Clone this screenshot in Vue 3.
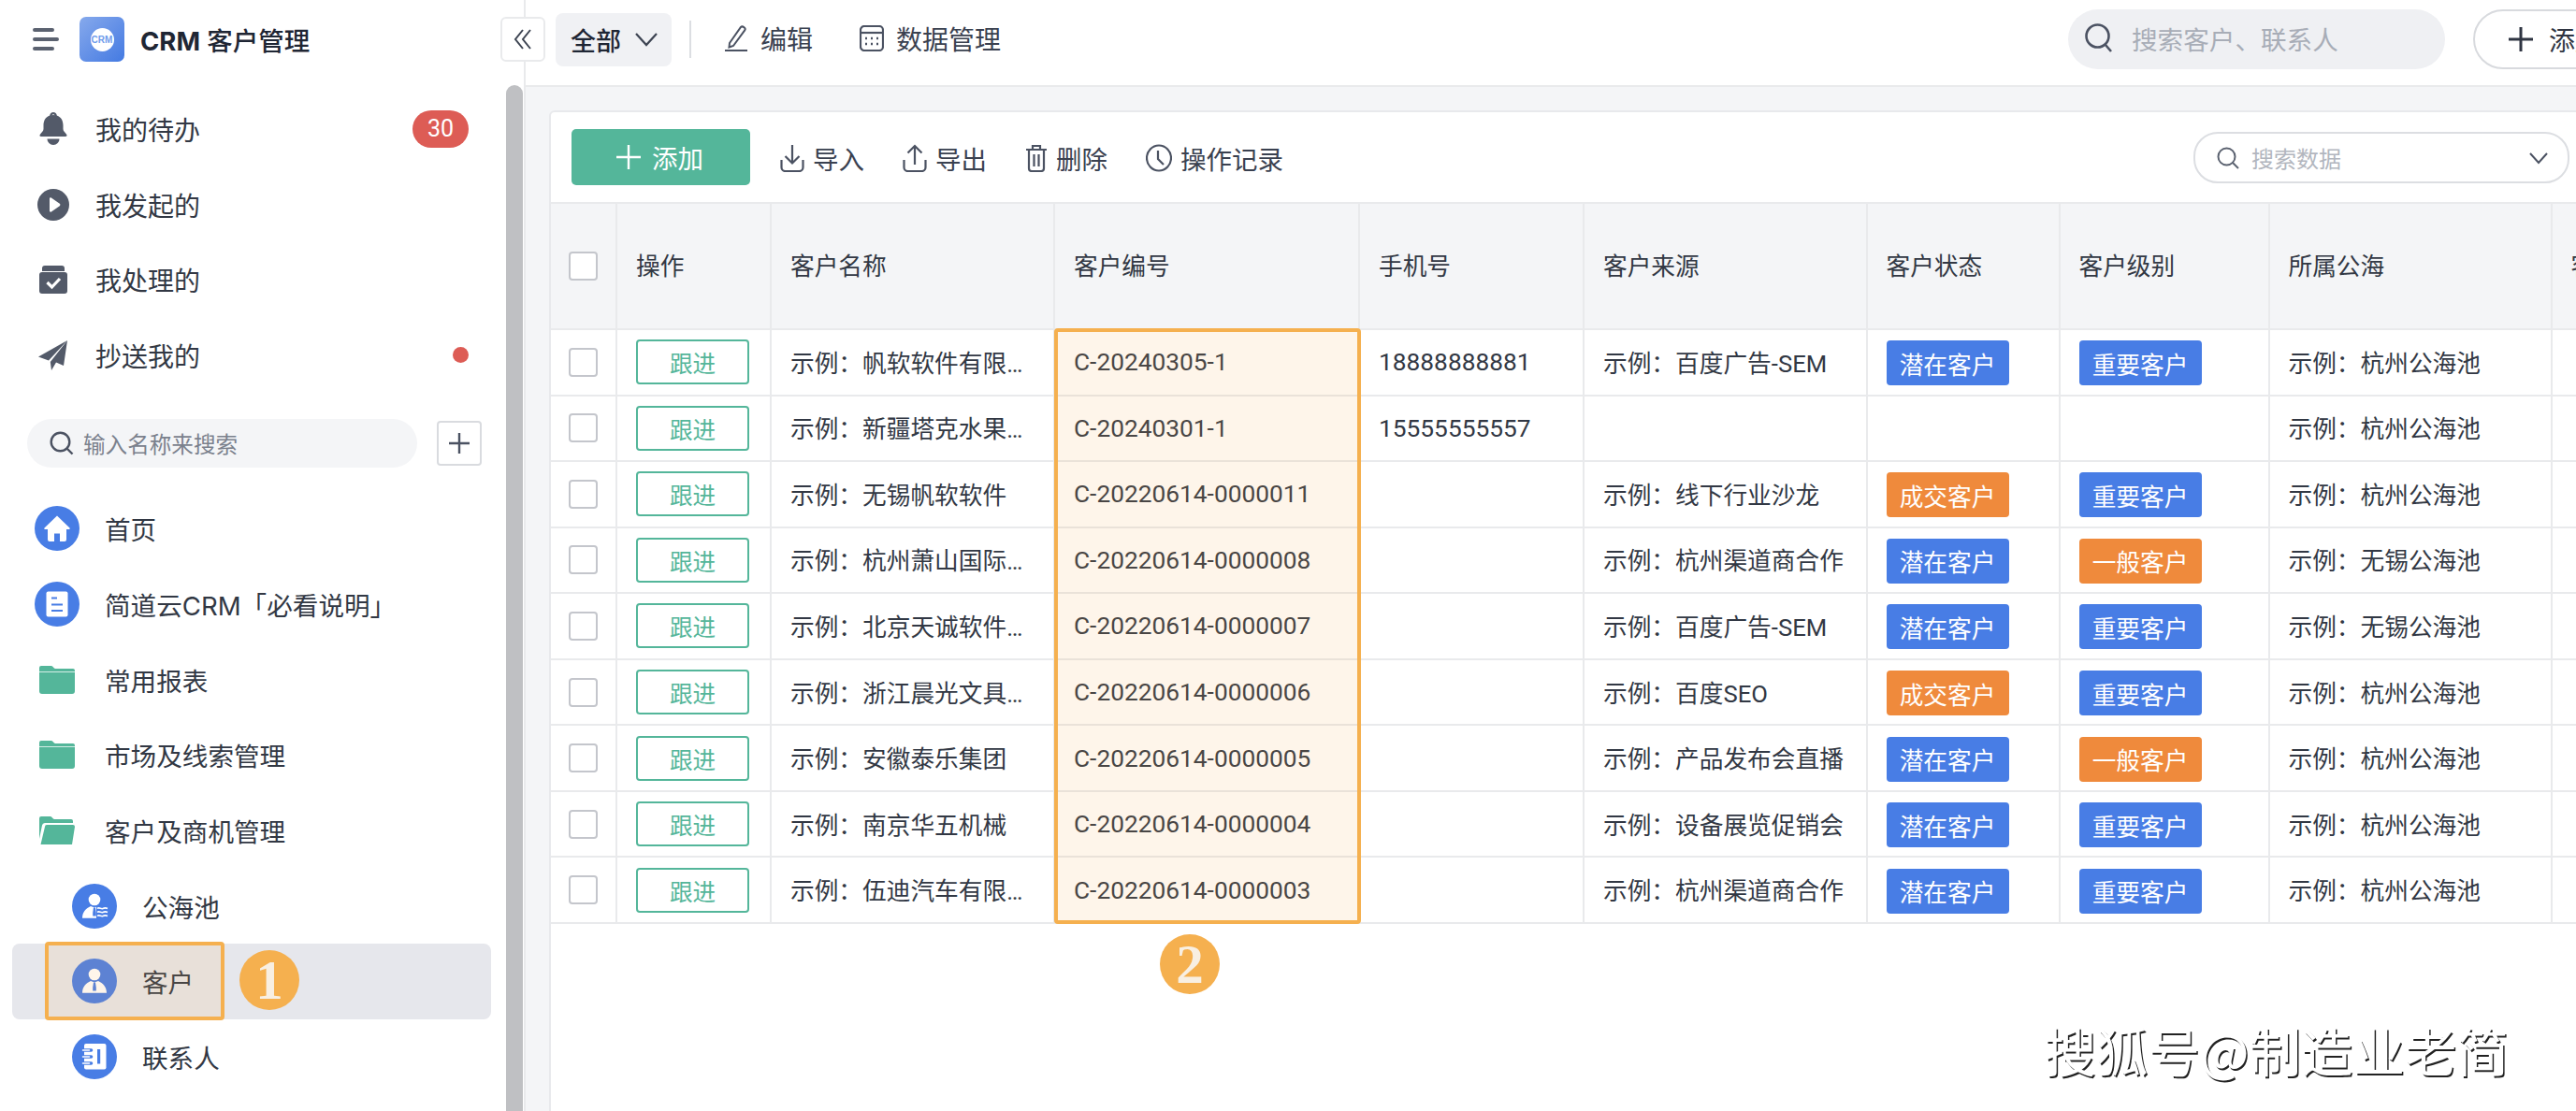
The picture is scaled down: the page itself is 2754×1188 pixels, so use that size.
<script setup>
const topItems = [
  { key: 'bell', label: '我的待办', badge: '30' },
  { key: 'play', label: '我发起的' },
  { key: 'box', label: '我处理的' },
  { key: 'plane', label: '抄送我的', dot: true }
];

const treeItems = [
  { key: 'home', label: '首页' },
  { key: 'doc', label: '简道云CRM「必看说明」' },
  { key: 'folder', label: '常用报表' },
  { key: 'folder', label: '市场及线索管理' },
  { key: 'open', label: '客户及商机管理' },
  { key: 'sea', label: '公海池', sub: true },
  { key: 'person', label: '客户', sub: true, active: true },
  { key: 'contact', label: '联系人', sub: true }
];

const columns = ['操作', '客户名称', '客户编号', '手机号', '客户来源', '客户状态', '客户级别', '所属公海', '客户'];

const rows = [
  { name: '示例：帆软软件有限公司', no: 'C-20240305-1', phone: '18888888881', source: '示例：百度广告-SEM', status: '潜在客户', level: '重要客户', sea: '示例：杭州公海池' },
  { name: '示例：新疆塔克水果有限公司', no: 'C-20240301-1', phone: '15555555557', source: '', status: '', level: '', sea: '示例：杭州公海池' },
  { name: '示例：无锡帆软软件', no: 'C-20220614-0000011', phone: '', source: '示例：线下行业沙龙', status: '成交客户', level: '重要客户', sea: '示例：杭州公海池' },
  { name: '示例：杭州萧山国际机场', no: 'C-20220614-0000008', phone: '', source: '示例：杭州渠道商合作', status: '潜在客户', level: '一般客户', sea: '示例：无锡公海池' },
  { name: '示例：北京天诚软件公司', no: 'C-20220614-0000007', phone: '', source: '示例：百度广告-SEM', status: '潜在客户', level: '重要客户', sea: '示例：无锡公海池' },
  { name: '示例：浙江晨光文具公司', no: 'C-20220614-0000006', phone: '', source: '示例：百度SEO', status: '成交客户', level: '重要客户', sea: '示例：杭州公海池' },
  { name: '示例：安徽泰乐集团', no: 'C-20220614-0000005', phone: '', source: '示例：产品发布会直播', status: '潜在客户', level: '一般客户', sea: '示例：杭州公海池' },
  { name: '示例：南京华五机械', no: 'C-20220614-0000004', phone: '', source: '示例：设备展览促销会', status: '潜在客户', level: '重要客户', sea: '示例：杭州公海池' },
  { name: '示例：伍迪汽车有限公司', no: 'C-20220614-0000003', phone: '', source: '示例：杭州渠道商合作', status: '潜在客户', level: '重要客户', sea: '示例：杭州公海池' }
];

const orangeTags = ['成交客户', '一般客户'];
const tagClass = (text) => (orangeTags.includes(text) ? 'tag orange' : 'tag');
</script>

<template>
  <div class="page">
    <aside class="side">
      <div class="side-head">
        <svg class="burger" width="28" height="24" viewBox="0 0 28 24">
          <path d="M2 2h19M2 12h24M2 22h19" stroke="#5b6270" stroke-width="4" stroke-linecap="round" />
        </svg>
        <div class="logo"><span>CRM</span></div>
        <div class="app-title"><b>CRM</b> 客户管理</div>
        <button class="collapse">
          <svg width="20" height="22" viewBox="0 0 20 22" fill="none" stroke="#3d4452" stroke-width="2">
            <path d="M10 1L2 11l8 10M18 1l-8 10 8 10" />
          </svg>
        </button>
      </div>

      <div class="side-body">
        <div class="side-scroll">
          <div v-for="item in topItems" :key="item.key" class="top-item">
            <span class="top-icon">
              <svg v-if="item.key === 'bell'" width="30" height="36" viewBox="0 0 30 36" fill="#535a69">
                <path fill-rule="evenodd" d="M15 0a4 4 0 0 1 3.800 3.400C23.500 5 25.500 9.200 25.500 14v4c0 2.500 2.500 3.800 3.800 6 .6 1 0 2-1.300 2H2c-1.300 0-1.900-1-1.300-2C2 21.800 4.500 20.500 4.500 18v-4c0-4.800 2-9 6.700-10.600A4 4 0 0 1 15 0zm0 2.200a1.800 1.800 0 0 0-1.500 1 9 9 0 0 1 3 0 1.800 1.800 0 0 0-1.500-1z" />
                <path d="M8.500 28.500h13c0 3.500-2.900 6.500-6.500 6.500s-6.500-3-6.500-6.500z" />
              </svg>
              <svg v-else-if="item.key === 'play'" width="34" height="34" viewBox="0 0 34 34">
                <circle cx="17" cy="17" r="17" fill="#535a69" />
                <path d="M13 10.500c0-1 1-1.500 1.800-1l9 6.300c.8.600.8 1.800 0 2.400l-9 6.300c-.8.500-1.800 0-1.800-1z" fill="#fff" />
              </svg>
              <svg v-else-if="item.key === 'box'" width="30" height="30" viewBox="0 0 30 30">
                <path d="M3 3a3 3 0 0 1 3-3h18a3 3 0 0 1 3 3v3H3z" fill="#535a69" />
                <rect y="7" width="30" height="23" rx="3" fill="#535a69" />
                <path d="M8.500 18l5 5 8.500-9" fill="none" stroke="#fff" stroke-width="3.200" />
              </svg>
              <svg v-else width="32" height="32" viewBox="0 0 32 32" fill="#535a69">
                <path d="M31 0L0 17.500 11 21.500z" />
                <path d="M31 0L27 27 19 23.500 14 32 12.800 23z" />
              </svg>
            </span>
            <span class="top-label">{{ item.label }}</span>
            <span v-if="item.badge" class="badge">{{ item.badge }}</span>
            <span v-if="item.dot" class="dot"></span>
          </div>

          <div class="side-search-row">
            <div class="side-search">
              <svg width="26" height="26" viewBox="0 0 26 26" fill="none" stroke="#4b5262" stroke-width="2.400">
                <circle cx="11.500" cy="11.500" r="9.800" />
                <path d="M18.500 18.500l6 6" />
              </svg>
              <span>输入名称来搜索</span>
            </div>
            <button class="plus-btn">
              <svg width="24" height="24" viewBox="0 0 24 24" stroke="#4b5262" stroke-width="2.400">
                <path d="M12 1v22M1 12h22" />
              </svg>
            </button>
          </div>

          <div class="tree">
            <div
              v-for="item in treeItems"
              :key="item.label"
              class="tree-item"
              :class="{ sub: item.sub, active: item.active }"
            >
              <span class="tree-icon">
                <svg v-if="item.key === 'folder'" width="38" height="30" viewBox="0 0 38 30" fill="#54b69a">
                  <path d="M0 2a2 2 0 0 1 2-2h11c1.500 0 2.500 3 4 3h19a2 2 0 0 1 2 2v1.300H0z" />
                  <path d="M0 7h38v20a3 3 0 0 1-3 3H3a3 3 0 0 1-3-3z" />
                </svg>
                <svg v-else-if="item.key === 'open'" width="38" height="30" viewBox="0 0 38 30" fill="#54b69a">
                  <path d="M0 2a2 2 0 0 1 2-2h10c1.500 0 2.500 3 4 3h18a2 2 0 0 1 2 2v2H6a3 3 0 0 0-3 2.500L0 24z" />
                  <path d="M6 11a2 2 0 0 1 2-2h28a2 2 0 0 1 2 2l-3 19H1.500z" />
                </svg>
                <svg v-else width="48" height="48" viewBox="0 0 48 48">
                  <circle cx="24" cy="24" r="24" fill="#487de5" />
                  <path v-if="item.key === 'home'" d="M24 10.500L10.500 23.500c-.6.600-.2 1.500.6 1.500H14v11a2 2 0 0 0 2 2h5v-8.500h6V38h5a2 2 0 0 0 2-2V25h2.900c.8 0 1.200-.9.600-1.500z" fill="#fff" />
                  <template v-else-if="item.key === 'doc'">
                    <rect x="12.500" y="10.500" width="23" height="27" rx="2" fill="#fff" />
                    <path d="M18 17.500h6M18 24.500h12M18 31h12" stroke="#487de5" stroke-width="2" />
                  </template>
                  <template v-else-if="item.key === 'sea' || item.key === 'person'">
                    <circle cx="24" cy="17" r="6.300" fill="#fff" />
                    <path d="M11 36.700c0-6.500 4-10.500 9-12.700l4 1.500 4-1.500c5 2.200 9 6.200 9 12.700z" fill="#fff" />
                    <path d="M23 25.500h2l.8 5.500v3.500h-3.600V31z" fill="#487de5" />
                    <g v-if="item.key === 'sea'">
                      <rect x="26" y="23" width="15" height="15" fill="#487de5" />
                      <path d="M27 26.500c2-2 4 1 6 0s3-1 5 0M27 30.500c2-2 4 1 6 0s3-1 5 0M27 34.500c2-2 4 1 6 0s3-1 5 0" stroke="#fff" stroke-width="1.500" fill="none" />
                    </g>
                  </template>
                  <template v-else>
                    <rect x="13" y="10" width="23.500" height="27.500" rx="2" fill="#fff" />
                    <rect x="27" y="16" width="3.200" height="15.500" fill="#487de5" />
                    <path d="M11.500 17h9M11.500 24h9M11.500 31h9" stroke="#487de5" stroke-width="3.600" stroke-linecap="round" />
                    <path d="M11.500 17h7M11.500 24h7M11.500 31h7" stroke="#fff" stroke-width="1.500" stroke-linecap="round" />
                  </template>
                </svg>
              </span>
              <span class="tree-label">{{ item.label }}</span>
              <template v-if="item.active">
                <span class="mark-box"></span>
                <span class="mark-num">1</span>
              </template>
            </div>
          </div>
        </div>
        <div class="scrollbar"></div>
      </div>
    </aside>

    <main class="main">
      <header class="top-bar">
        <button class="all-btn">
          <span>全部</span>
          <svg width="26" height="16" viewBox="0 0 26 16" fill="none" stroke="#3d4452" stroke-width="2.200">
            <path d="M2 2l11 12L24 2" />
          </svg>
        </button>
        <i class="bar-line"></i>
        <div class="bar-link edit">
          <svg width="26" height="28" viewBox="0 0 26 28" fill="none" stroke="#4b5262" stroke-width="2">
            <path d="M6 19L18 2c1-1 2.500-.5 3.500.3s1.500 2 .7 3L10 22l-4.500 1.500z" />
            <path d="M1 27h24" />
          </svg>
          <span>编辑</span>
        </div>
        <div class="bar-link">
          <svg width="26" height="28" viewBox="0 0 26 28" fill="none" stroke="#4b5262" stroke-width="2.200">
            <rect x="1" y="1" width="24" height="26" rx="4" />
            <path d="M1 8h24" />
            <path d="M6 14h2M12 14h2M18 14h2M6 20h2M12 20h2M18 20h2" stroke-width="2.600" />
          </svg>
          <span>数据管理</span>
        </div>
        <div class="bar-search">
          <svg width="30" height="32" viewBox="0 0 30 32" fill="none" stroke="#4b5262" stroke-width="2.600">
            <circle cx="13.500" cy="13.500" r="12" />
            <path d="M22 23l6 7" />
          </svg>
          <span>搜索客户、联系人</span>
        </div>
        <button class="bar-add">
          <svg width="26" height="26" viewBox="0 0 26 26" stroke="#2f3542" stroke-width="3">
            <path d="M13 0v26M0 13h26" />
          </svg>
          <span>添加</span>
        </button>
      </header>

      <section class="content">
        <div class="card">
          <div class="toolbar">
            <button class="add-btn">
              <svg width="26" height="26" viewBox="0 0 26 26" stroke="#fff" stroke-width="2.400">
                <path d="M13 0v26M0 13h26" />
              </svg>
              <span>添加</span>
            </button>
            <div class="tool">
              <svg width="26" height="30" viewBox="0 0 26 30" fill="none" stroke="#4b5262" stroke-width="2.200">
                <path d="M13 1v19M5.500 13l7.500 7.500 7.500-7.500" />
                <path d="M1.500 17v8a4 4 0 0 0 4 4h15a4 4 0 0 0 4-4v-8" />
              </svg>
              <span>导入</span>
            </div>
            <div class="tool">
              <svg width="26" height="30" viewBox="0 0 26 30" fill="none" stroke="#4b5262" stroke-width="2.200">
                <path d="M13 22V2M5.500 9.500L13 2l7.500 7.500" />
                <path d="M1.500 17v8a4 4 0 0 0 4 4h15a4 4 0 0 0 4-4v-8" />
              </svg>
              <span>导出</span>
            </div>
            <div class="tool">
              <svg width="24" height="30" viewBox="0 0 24 30" fill="none" stroke="#4b5262" stroke-width="2.200">
                <path d="M1 6h22M8 6V2h8v4" />
                <path d="M4 6v20a3 3 0 0 0 3 3h10a3 3 0 0 0 3-3V6M9.500 11v13M14.500 11v13" />
              </svg>
              <span>删除</span>
            </div>
            <div class="tool">
              <svg width="28" height="30" viewBox="0 0 28 30" fill="none" stroke="#4b5262" stroke-width="2.200">
                <ellipse cx="14" cy="15" rx="13" ry="13.500" />
                <path d="M13 7v9l6 6" />
              </svg>
              <span>操作记录</span>
            </div>
            <div class="data-search">
              <svg width="24" height="24" viewBox="0 0 24 24" fill="none" stroke="#5b6270" stroke-width="2">
                <circle cx="10.500" cy="10.500" r="9" />
                <path d="M17 17l6 6" />
              </svg>
              <span>搜索数据</span>
              <svg class="caret" width="22" height="14" viewBox="0 0 22 14" fill="none" stroke="#4b5262" stroke-width="2">
                <path d="M2 2l9 10 9-10" />
              </svg>
            </div>
          </div>

          <div class="table">
            <div class="row head">
              <div class="cell check"><i class="box"></i></div>
              <div v-for="col in columns" :key="col" class="cell label">{{ col }}</div>
            </div>
            <div v-for="row in rows" :key="row.no" class="row">
              <div class="cell check"><i class="box"></i></div>
              <div class="cell"><span class="follow">跟进</span></div>
              <div class="cell text"><span class="name">{{ row.name }}</span></div>
              <div class="cell num">{{ row.no }}</div>
              <div class="cell num">{{ row.phone }}</div>
              <div class="cell text">{{ row.source }}</div>
              <div class="cell"><span v-if="row.status" :class="tagClass(row.status)">{{ row.status }}</span></div>
              <div class="cell"><span v-if="row.level" :class="tagClass(row.level)">{{ row.level }}</span></div>
              <div class="cell text">{{ row.sea }}</div>
              <div class="cell"></div>
            </div>
            <div class="col-mark"></div>
            <div class="col-num">2</div>
          </div>
        </div>
      </section>
      <div class="watermark">搜狐号@制造业老简</div>
    </main>
  </div>
</template>

<style>
body {
  background: #fff;
}
</style>

<style scoped>
.page {
  display: flex;
  width: 2754px;
  height: 1188px;
  overflow: hidden;
  background: #fff;
  font-family: Roboto, "Noto Sans CJK SC", sans-serif;
  color: #323844;
}

button {
  font-family: inherit;
  cursor: pointer;
}

/* sidebar */
.side {
  flex: 0 0 562px;
  display: flex;
  flex-direction: column;
  position: relative;
  border-right: 2px solid #e9eaec;
  box-sizing: border-box;
}

.side-head {
  height: 91px;
  flex: none;
  display: flex;
  align-items: center;
  padding-left: 35px;
  padding-bottom: 7px;
  box-sizing: border-box;
}

.burger {
  margin-right: 22px;
}

.logo {
  width: 48px;
  height: 48px;
  border-radius: 7px;
  background: linear-gradient(135deg, #86a9ec, #447ae2);
  display: flex;
  align-items: center;
  justify-content: center;
}

.logo span {
  width: 25px;
  height: 25px;
  border-radius: 50%;
  background: #fff;
  color: #6f9cec;
  font-size: 10px;
  font-weight: 700;
  line-height: 25px;
  text-align: center;
  font-family: "Liberation Sans", sans-serif;
  overflow: hidden;
}

.app-title {
  margin-left: 17px;
  font-family: Inter, "Noto Sans CJK SC", sans-serif;
  font-size: 27.500px;
  font-weight: 500;
  color: #1f2634;
}

.app-title b {
  font-weight: 700;
}

.collapse {
  position: absolute;
  left: 535px;
  top: 18px;
  width: 48px;
  height: 48px;
  background: #fff;
  border: 2px solid #e9eaec;
  border-radius: 6px;
  display: flex;
  align-items: center;
  justify-content: center;
  padding: 0;
  z-index: 2;
}

.side-body {
  flex: 1;
  display: flex;
  min-height: 0;
}

.side-scroll {
  flex: 0 0 541px;
  padding-top: 7px;
  box-sizing: border-box;
}

.scrollbar {
  width: 18px;
  flex: none;
  background: #bfc0c3;
  border-radius: 9px 9px 0 0;
}

.top-item {
  height: 80.500px;
  display: flex;
  align-items: center;
  padding: 0 40px;
  font-size: 28px;
}

.top-icon {
  width: 34px;
  margin-right: 28px;
  display: flex;
  justify-content: center;
}

.top-label {
  flex: 1;
}

.badge {
  width: 60px;
  height: 40px;
  border-radius: 20px;
  background: #dd5c55;
  color: #fff;
  font-size: 25px;
  line-height: 39px;
  text-align: center;
}

.dot {
  width: 17px;
  height: 17px;
  border-radius: 50%;
  background: #dd5c55;
}

.side-search-row {
  display: flex;
  align-items: center;
  gap: 21px;
  padding-left: 29px;
  margin-top: 28px;
}

.side-search {
  width: 417px;
  height: 52px;
  border-radius: 26px;
  background: #f4f5f7;
  display: flex;
  align-items: center;
  gap: 10px;
  padding-left: 24px;
  box-sizing: border-box;
  font-size: 23.600px;
  color: #7b818d;
}

.plus-btn {
  width: 48px;
  height: 48px;
  border: 2px solid #d9dbdf;
  border-radius: 4px;
  background: #fff;
  padding: 0;
  display: flex;
  align-items: center;
  justify-content: center;
}

.tree {
  margin-top: 25px;
  padding: 0 16px 0 13px;
}

.tree-item {
  height: 80.700px;
  display: flex;
  align-items: center;
  padding-left: 24px;
  border-radius: 8px;
  position: relative;
  font-family: Inter, "Noto Sans CJK SC", sans-serif;
  font-size: 27.600px;
}

.tree-item.sub {
  padding-left: 64px;
}

.tree-item.active {
  background: #e6e7ec;
}

.tree-icon {
  width: 48px;
  margin-right: 27px;
  display: flex;
  justify-content: center;
}

.mark-box {
  position: absolute;
  left: 35px;
  top: -2.500px;
  width: 192px;
  height: 84px;
  box-sizing: border-box;
  border: 4px solid #f5b04f;
  border-radius: 4px;
  background: rgba(245, 176, 79, 0.12);
}

.mark-num,
.col-num {
  position: absolute;
  width: 64px;
  height: 64px;
  border-radius: 50%;
  background: #f5b04f;
  color: #f8efe2;
  font-family: "Liberation Serif", serif;
  font-size: 59px;
  font-weight: 700;
  line-height: 64px;
  text-align: center;
}

.mark-num {
  left: 243px;
  top: 7px;
}

/* main */
.main {
  flex: 1;
  min-width: 0;
  display: flex;
  flex-direction: column;
  position: relative;
}

.top-bar {
  height: 93px;
  flex: none;
  box-sizing: border-box;
  border-bottom: 2px solid #e9eaec;
  display: flex;
  align-items: center;
  padding: 0 0 7px 32px;
  white-space: nowrap;
}

.all-btn {
  width: 124px;
  height: 57px;
  background: #f0f1f4;
  border: 0;
  border-radius: 8px;
  display: flex;
  align-items: center;
  gap: 14px;
  padding: 0 0 0 16px;
  font-size: 27px;
  font-weight: 500;
  color: #1f2634;
}

.bar-line {
  width: 2px;
  height: 40px;
  background: #dcdee2;
  margin: 0 35px 0 19px;
}

.bar-link {
  display: flex;
  align-items: center;
  gap: 13px;
  font-size: 28px;
  color: #3a4150;
  margin-bottom: 3px;
}

.bar-link.edit {
  margin-right: 50px;
}

.bar-search {
  margin-left: auto;
  width: 403px;
  height: 64px;
  box-sizing: border-box;
  border-radius: 32px;
  background: #eff0f3;
  display: flex;
  align-items: center;
  gap: 20px;
  padding: 0 0 3px 18px;
  font-size: 27.600px;
  color: #a8adb7;
}

.bar-add {
  flex: none;
  width: 220px;
  height: 64px;
  margin-left: 30px;
  margin-right: -110px;
  border: 2px solid #d8dade;
  border-radius: 32px;
  background: #fff;
  display: flex;
  align-items: center;
  gap: 17px;
  padding: 0 0 0 36px;
  font-size: 28px;
  color: #2f3542;
}

.content {
  flex: 1;
  background: #f4f5f7;
  padding: 25px 0 0 25px;
  min-height: 0;
}

.card {
  width: 2400px;
  height: 1200px;
  box-sizing: border-box;
  background: #fff;
  border: 2px solid #e8e9ec;
  border-radius: 6px;
}

.toolbar {
  height: 96px;
  width: 2158px;
  box-sizing: border-box;
  display: flex;
  align-items: center;
  padding: 0 0 0 22px;
  white-space: nowrap;
}

.add-btn {
  width: 191px;
  height: 60px;
  background: #54b69a;
  border: 0;
  border-radius: 5px;
  color: #fff;
  font-size: 27.500px;
  display: flex;
  align-items: center;
  justify-content: center;
  gap: 12px;
  padding: 0 2px 0 0;
  margin-right: 32px;
  margin-bottom: 1px;
}

.tool {
  display: flex;
  align-items: center;
  gap: 9px;
  margin-right: 41px;
  font-size: 27.500px;
  color: #3a4150;
  margin-top: 1px;
}

.data-search {
  margin-left: auto;
  width: 402px;
  height: 55px;
  box-sizing: border-box;
  border: 2px solid #dcdee2;
  border-radius: 26px;
  display: flex;
  align-items: center;
  gap: 13px;
  padding: 0 20px 0 23px;
  font-size: 24px;
  color: #b2b6be;
  margin-top: 1px;
}

.caret {
  margin-left: auto;
}

.table {
  position: relative;
  font-size: 25.700px;
}

.row {
  display: grid;
  grid-template-columns: 71px 165px 303px 326px 240px 302.500px 206px 224px 302px 300px;
  height: 70.550px;
  box-sizing: border-box;
  border-bottom: 2px solid #e9eaec;
}

.row.head {
  height: 137px;
  background: #f4f5f7;
  border-top: 2px solid #e9eaec;
}

.cell {
  border-right: 2px solid #e9eaec;
  padding-left: 20px;
  display: flex;
  align-items: center;
  white-space: nowrap;
  overflow: hidden;
  min-width: 0;
}

.cell.label {
  padding-bottom: 4px;
}

.cell.text {
  padding-bottom: 2px;
}

.cell.check {
  padding-left: 19px;
}

.box {
  width: 31px;
  height: 31px;
  box-sizing: border-box;
  border: 2px solid #c4c6cc;
  border-radius: 4px;
  background: #fff;
}

.num {
  font-size: 26.300px;
}

.follow {
  width: 121px;
  height: 48px;
  box-sizing: border-box;
  border: 2px solid #54b69a;
  border-radius: 4px;
  color: #54b69a;
  font-size: 24.600px;
  display: flex;
  align-items: center;
  justify-content: center;
}

.name {
  width: 250px;
  overflow: hidden;
  text-overflow: ellipsis;
}

.tag {
  width: 131px;
  height: 48px;
  border-radius: 4px;
  background: #487de5;
  color: #fff;
  display: flex;
  align-items: center;
  justify-content: center;
  margin-top: 2px;
}

.tag.orange {
  background: #ef8a3c;
}

.col-mark {
  position: absolute;
  left: 538px;
  top: 134.500px;
  width: 328px;
  height: 637px;
  box-sizing: border-box;
  border: 4px solid #f5b04f;
  border-radius: 4px;
  background: rgba(245, 176, 79, 0.12);
}

.col-num {
  left: 651px;
  top: 783px;
}

.watermark {
  position: absolute;
  right: 72px;
  bottom: 26px;
  font-family: "Noto Sans CJK SC", sans-serif;
  font-size: 55.500px;
  font-weight: 400;
  color: #fff;
  text-shadow: 1.500px 1.500px 0 #222;
  white-space: nowrap;
}
</style>
